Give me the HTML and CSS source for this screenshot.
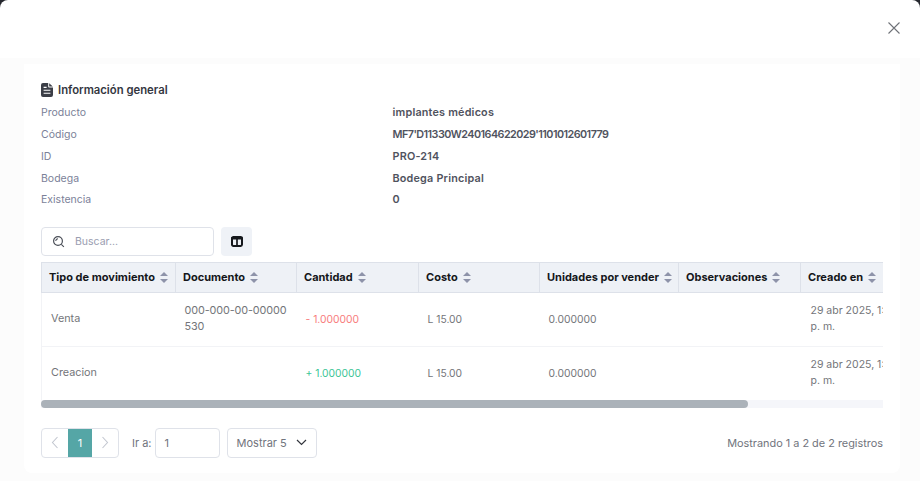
FILE: index.html
```html
<!DOCTYPE html>
<html lang="es">
<head>
<meta charset="utf-8">
<title>Información general</title>
<link rel="stylesheet" href="styles.css">
</head>
<body>
<div class="modal">
  <header class="modal-head">
    <button class="close" aria-label="Cerrar">
      <svg width="14" height="14" viewBox="0 0 14 14"><path d="M1.5 1.5l11 11M12.5 1.5l-11 11" stroke="#6f7278" stroke-width="1.1" fill="none"/></svg>
    </button>
  </header>
  <div class="modal-body">
    <section class="card">
      <h2 class="title">
        <svg width="12" height="14" viewBox="0 0 12 14"><path fill="#3b3e47" d="M2 0h5.2v3.4c0 .7.5 1.2 1.2 1.2H12V12a2 2 0 0 1-2 2H2a2 2 0 0 1-2-2V2a2 2 0 0 1 2-2z"/><path fill="#3b3e47" d="M8.2.2L11.8 3.6H8.6a.4.4 0 0 1-.4-.4z"/><path stroke="#fff" stroke-width="1.1" d="M2.6 4.4h3M2.6 7.3h6.8M2.6 10.2h6.8" fill="none"/></svg>
        <span>Información general</span>
      </h2>
      <dl class="info">
        <div class="info-row"><dt>Producto</dt><dd>implantes médicos</dd></div>
        <div class="info-row"><dt>Código</dt><dd class="code">MF7'D11330W240164622029'1101012601779</dd></div>
        <div class="info-row"><dt>ID</dt><dd>PRO-214</dd></div>
        <div class="info-row"><dt>Bodega</dt><dd>Bodega Principal</dd></div>
        <div class="info-row"><dt>Existencia</dt><dd>0</dd></div>
      </dl>
      <div class="toolbar">
        <label class="search">
          <svg width="13" height="13" viewBox="0 0 13 13"><circle cx="6" cy="6" r="4.4" fill="none" stroke="#4b4f58" stroke-width="1.2"/><path d="M9.3 9.3l2.6 2.6M3.8 6a2.2 2.2 0 0 1 2.2-2.2" stroke="#4b4f58" stroke-width="1.1" fill="none"/></svg>
          <span class="placeholder">Buscar...</span>
        </label>
        <button class="columns" aria-label="Columnas">
          <svg width="12" height="11" viewBox="0 0 12 11"><rect x="1" y="1" width="10" height="9" rx="1.4" fill="none" stroke="#16181d" stroke-width="2"/><path d="M0 2.4h12" stroke="#16181d" stroke-width="2.4"/><path d="M6 2v8" stroke="#16181d" stroke-width="1.7"/></svg>
        </button>
      </div>
      <div class="table-wrap">
        <table class="grid">
          <thead>
            <tr>
              <th class="c1"><span class="th">Tipo de movimiento<i class="sort"></i></span></th>
              <th class="c2"><span class="th">Documento<i class="sort"></i></span></th>
              <th class="c3"><span class="th">Cantidad<i class="sort"></i></span></th>
              <th class="c4"><span class="th">Costo<i class="sort"></i></span></th>
              <th class="c5"><span class="th">Unidades por vender<i class="sort"></i></span></th>
              <th class="c6"><span class="th">Observaciones<i class="sort"></i></span></th>
              <th class="c7"><span class="th">Creado en<i class="sort"></i></span></th>
              <th class="c8"><span class="th"></span></th>
            </tr>
          </thead>
          <tbody>
            <tr>
              <td>Venta</td>
              <td class="doc">000-000-00-00000<br>530</td>
              <td class="neg">- 1.000000</td>
              <td class="num">L 15.00</td>
              <td class="num">0.000000</td>
              <td></td>
              <td class="date">29 abr 2025, 1:30<br>p. m.</td>
              <td></td>
            </tr>
            <tr>
              <td>Creacion</td>
              <td></td>
              <td class="pos">+ 1.000000</td>
              <td class="num">L 15.00</td>
              <td class="num">0.000000</td>
              <td></td>
              <td class="date">29 abr 2025, 1:30<br>p. m.</td>
              <td></td>
            </tr>
          </tbody>
        </table>
      </div>
      <div class="scrollbar"><div class="thumb"></div></div>
      <footer class="pager">
        <div class="pages">
          <span class="arrow"><svg width="8" height="13" viewBox="0 0 8 13"><path d="M6.5 1L1.5 6.5l5 5.5" fill="none" stroke="#c3c7d0" stroke-width="1.1"/></svg></span>
          <span class="page-on">1</span>
          <span class="arrow"><svg width="8" height="13" viewBox="0 0 8 13"><path d="M1.5 1l5 5.5-5 5.5" fill="none" stroke="#c3c7d0" stroke-width="1.1"/></svg></span>
        </div>
        <span class="goto">Ir a:</span>
        <span class="goto-input">1</span>
        <span class="show">Mostrar 5
          <svg width="11" height="7" viewBox="0 0 11 7"><path d="M1 1l4.5 4.5L10 1" fill="none" stroke="#33363d" stroke-width="1.2"/></svg>
        </span>
        <span class="count">Mostrando 1 a 2 de 2 registros</span>
      </footer>
    </section>
  </div>
</div>
</body>
</html>
```

FILE: styles.css
```css
* { box-sizing: border-box; }
html, body { margin: 0; height: 100%; }
body {
  background: #25272e;
  font-family: Inter, "Liberation Sans", sans-serif;
  overflow: hidden;
}
.modal {
  height: 481px;
  background: #fff;
  border-radius: 8px 8px 0 0;
  overflow: hidden;
  display: flex;
  flex-direction: column;
}
.modal-head {
  height: 58px;
  display: flex;
  justify-content: flex-end;
  align-items: flex-start;
  padding: 21px 19px 0 0;
}
.close { background: none; border: 0; padding: 0; height: 14px; display: block; }
.close svg { display: block; }
.modal-body {
  flex: 1;
  background: #fcfcfc;
  padding: 6px 20px 8px 24px;
  display: flex;
  min-height: 0;
}
.card {
  flex: 1;
  min-width: 0;
  background: #fff;
  border-radius: 0 0 8px 8px;
  padding: 17px 17px 0;
}
.title {
  margin: 0;
  height: 18px;
  display: flex;
  align-items: center;
  gap: 5px;
  font-size: 11.3px;
  font-weight: 600;
  color: #34373f;
}
.info { margin: 3.4px 0 0; }
.info-row {
  display: grid;
  grid-template-columns: 351.5px 1fr;
  height: 21.8px;
  align-items: center;
  font-size: 10.5px;
  line-height: 14px;
}
.info-row dt { color: #7b7f98; }
.info-row dd { margin: 0; color: #50535e; font-weight: 600; font-size: 10.8px; letter-spacing: 0.2px; }
.info-row dd.code { letter-spacing: -0.55px; }
.toolbar { display: flex; gap: 7px; margin-top: 15.6px; }
.search {
  width: 173px;
  height: 29px;
  border: 1px solid #dfe2e9;
  border-radius: 4px;
  display: flex;
  align-items: center;
  gap: 10px;
  padding-left: 10px;
  font-size: 10.5px;
  color: #9a9db0;
}
.search svg { flex: none; }
.columns {
  width: 31px;
  height: 29px;
  background: #eff2f7;
  border: 0;
  border-radius: 4px;
  padding: 0;
  display: flex;
  align-items: center;
  justify-content: center;
}
.table-wrap {
  margin-top: 6px;
  overflow: hidden;
  height: 138px;
}
.scrollbar {
  height: 8px;
  background: #f5f6fa;
}
.thumb {
  width: 84%;
  height: 8px;
  background: #abb2b9;
  border-radius: 4px;
}
.grid {
  border-collapse: collapse;
  table-layout: fixed;
  width: 1002px;
  font-size: 10.8px;
}
.c1 { width: 134px; }
.c2 { width: 121px; }
.c3 { width: 122px; }
.c4 { width: 121px; }
.c5 { width: 139px; }
.c6 { width: 122px; }
.c7 { width: 121px; }
.c8 { width: 122px; }
.grid th {
  height: 30px;
  padding: 0 7px;
  background: #eef1f6;
  border: 1px solid #dde1e9;
  border-left-width: 0;
  font-weight: 700;
  text-align: left;
  color: #14161a;
  white-space: nowrap;
}
.grid th:first-child { border-left-width: 1px; }
.th { display: flex; align-items: center; gap: 5px; font-size: 11px; min-height: 11px; }
.sort { position: relative; width: 9px; height: 11px; flex: none; }
.sort::before, .sort::after {
  content: "";
  position: absolute;
  left: 0;
  border-left: 4.5px solid transparent;
  border-right: 4.5px solid transparent;
}
.sort::before { top: 0; border-bottom: 4.5px solid #8e93a9; }
.sort::after { bottom: 0; border-top: 4.5px solid #8e93a9; }
.grid td {
  height: 54px;
  padding: 0 9px;
  color: #737579;
  border-bottom: 1px solid #f2f3f6;
  line-height: 16px;
  vertical-align: middle;
  overflow: hidden;
  white-space: nowrap;
}
.grid tbody tr:last-child td { border-bottom-color: transparent; }
.grid td:first-child { border-left: 1px solid #f2f3f6; }
.grid td.neg { color: #f87c7c; font-size: 10.3px; }
.grid td.pos { color: #3cc596; font-size: 10.3px; }
.grid td.num { font-size: 10.3px; }
.grid td.doc { letter-spacing: -0.1px; }
.grid td.date { font-size: 10.5px; padding-left: 10px; }
.pager {
  display: flex;
  align-items: center;
  margin-top: 20px;
  font-size: 11px;
  color: #71747d;
}
.pages {
  width: 78px;
  height: 30px;
  border: 1px solid #dfe2e9;
  border-radius: 4px;
  display: flex;
  overflow: hidden;
}
.arrow {
  flex: 1;
  display: flex;
  align-items: center;
  justify-content: center;
}
.page-on {
  width: 24px;
  background: #55a6a6;
  color: #fff;
  display: flex;
  align-items: center;
  justify-content: center;
}
.goto { margin-left: 13px; margin-right: 3px; }
.goto-input, .show {
  height: 30px;
  border: 1px solid #dfe2e9;
  border-radius: 4px;
  display: flex;
  align-items: center;
}
.goto-input { width: 65px; padding-left: 9px; }
.show {
  width: 90px;
  margin-left: 7px;
  padding: 0 9px;
  justify-content: space-between;
}
.count { margin-left: auto; font-size: 10.9px; }
```
